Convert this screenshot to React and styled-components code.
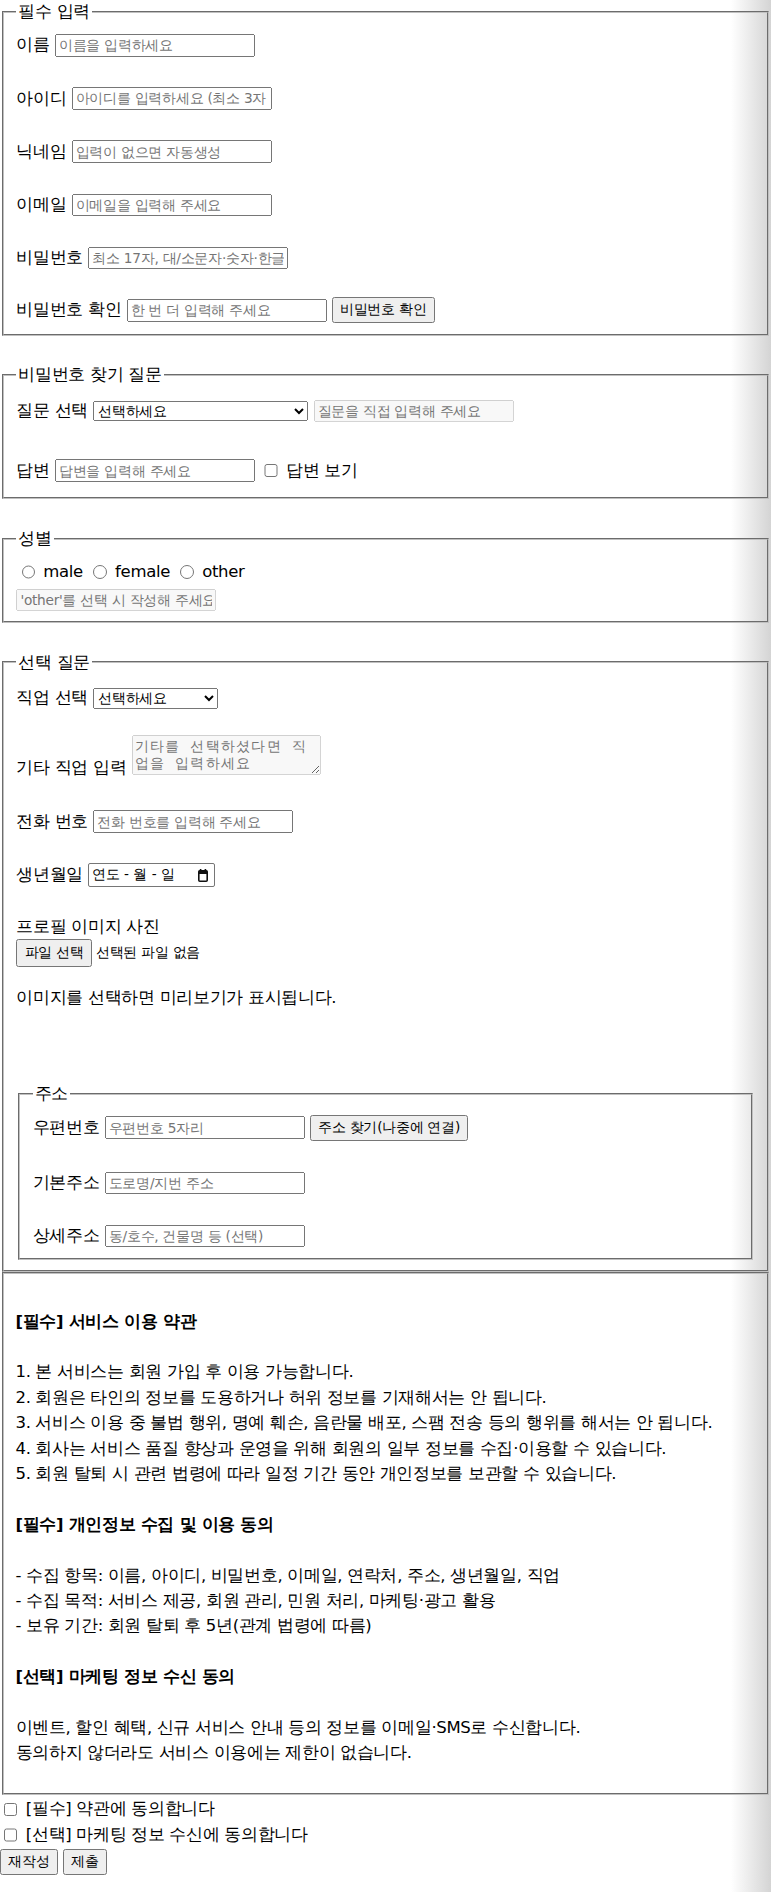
import React from 'react'
import styled, { createGlobalStyle, css } from 'styled-components'

const GlobalStyle = createGlobalStyle`
  html {
    background: linear-gradient(90deg, #fff 0, #fff calc(100% - 40px), #d4d4d4 100%);
  }
  body {
    margin: 0;
    font-family: "DejaVu Sans", sans-serif;
    font-size: 16.5px;
    line-height: 1.45;
    letter-spacing: -0.33px;
    color: #000;
  }
`

const controlFont = css`
  font-family: "DejaVu Sans", sans-serif;
  font-size: 13.7px;
  letter-spacing: -0.27px;
`

const Form = styled.form`
  display: block;
`

const Fieldset = styled.fieldset`
  margin: ${p => p.$mt || 0}px 2px 0;
  padding: 5.8px 12.4px ${p => p.$pb ?? 10.3}px;
  border: 2px groove #c0c0c0;
  min-width: 0;
`

const Legend = styled.legend`
  padding: 0 2px;
`

const Row = styled.div`
  display: flex;
  align-items: ${p => p.$align || 'center'};
  gap: ${p => p.$gap ?? 5.25}px;
  margin-top: ${p => p.$mt || 0}px;
  height: ${p => (p.$h ? `${p.$h}px` : 'auto')};
`

const Label = styled.label`
  white-space: nowrap;
  margin-bottom: ${p => (p.$drop ? -4.8 : 0)}px;
`

const TextInput = styled.input`
  ${controlFont};
  box-sizing: border-box;
  width: ${p => p.$w || 200}px;
  height: 22.5px;
  padding: 1px 2px;
  margin: 0;
  flex: none;
`

const Select = styled.select`
  ${controlFont};
  box-sizing: border-box;
  width: ${p => p.$w}px;
  height: 20.5px;
  margin: 0;
  flex: none;
`

const Button = styled.button`
  ${controlFont};
  height: ${p => p.$h || 26}px;
  padding: 1px 6.2px;
  margin: 0;
  flex: none;
  white-space: nowrap;
`

const Check = styled.input`
  width: 13.4px;
  height: 13.4px;
  margin: 0 3.1px 0 ${p => p.$ml ?? 4.1}px;
  flex: none;
`

const Radio = styled.input`
  width: 13.4px;
  height: 13.4px;
  margin: 0 3.1px 0 5.2px;
  flex: none;
`

const TextArea = styled.textarea`
  box-sizing: border-box;
  width: 189px;
  height: 39.7px;
  padding: 2px;
  margin: 0;
  font-family: "DejaVu Sans Mono", monospace;
  font-size: 14.2px;
  line-height: 16.5px;
  letter-spacing: 1.3px;
  flex: none;
`

const DateField = styled.div`
  ${controlFont};
  box-sizing: border-box;
  width: 127px;
  height: 23.4px;
  display: flex;
  align-items: center;
  gap: 4.7px;
  padding: 0 6px 0 2.5px;
  border: 1px solid #767676;
  border-radius: 2px;
  background: #fff;
  flex: none;

  svg {
    margin-left: auto;
  }
`

const FileNote = styled.span`
  ${controlFont};
  white-space: nowrap;
`

const Text = styled.p`
  margin: ${p => p.$mt || 0}px 0 0;
`

const Terms = styled.div`
  margin: 0 2px;
  padding: 34.2px 11.5px 26.8px;
  border: 2px groove #c0c0c0;
  line-height: 25.4px;
`

const TermsSection = styled.section`
  & + & {
    margin-top: 25.4px;
  }
`

const TermsTitle = styled.h4`
  margin: 0;
  font-size: inherit;
  font-weight: bold;
`

const TermsBody = styled.div`
  margin-top: 25.4px;
`

const CalendarIcon = () => (
  <svg width="10" height="13" viewBox="0 0 10 13" aria-hidden="true">
    <rect x="1.8" y="0" width="1.6" height="3" fill="#111" />
    <rect x="6.6" y="0" width="1.6" height="3" fill="#111" />
    <rect x="0.8" y="1.8" width="8.4" height="10.4" rx="1" fill="none" stroke="#111" strokeWidth="1.6" />
    <rect x="0.8" y="1.8" width="8.4" height="3.2" fill="#111" />
  </svg>
)

const terms = [
  {
    title: '[필수] 서비스 이용 약관',
    lines: [
      '1. 본 서비스는 회원 가입 후 이용 가능합니다.',
      '2. 회원은 타인의 정보를 도용하거나 허위 정보를 기재해서는 안 됩니다.',
      '3. 서비스 이용 중 불법 행위, 명예 훼손, 음란물 배포, 스팸 전송 등의 행위를 해서는 안 됩니다.',
      '4. 회사는 서비스 품질 향상과 운영을 위해 회원의 일부 정보를 수집·이용할 수 있습니다.',
      '5. 회원 탈퇴 시 관련 법령에 따라 일정 기간 동안 개인정보를 보관할 수 있습니다.',
    ],
  },
  {
    title: '[필수] 개인정보 수집 및 이용 동의',
    lines: [
      '- 수집 항목: 이름, 아이디, 비밀번호, 이메일, 연락처, 주소, 생년월일, 직업',
      '- 수집 목적: 서비스 제공, 회원 관리, 민원 처리, 마케팅·광고 활용',
      '- 보유 기간: 회원 탈퇴 후 5년(관계 법령에 따름)',
    ],
  },
  {
    title: '[선택] 마케팅 정보 수신 동의',
    lines: [
      '이벤트, 할인 혜택, 신규 서비스 안내 등의 정보를 이메일·SMS로 수신합니다.',
      '동의하지 않더라도 서비스 이용에는 제한이 없습니다.',
    ],
  },
]

const App = () => {
  return (
    <>
      <GlobalStyle />
      <Form onSubmit={e => e.preventDefault()}>
        <Fieldset>
          <Legend>필수 입력</Legend>
          <Row $mt={3.6}>
            <Label>이름</Label>
            <TextInput placeholder="이름을 입력하세요" />
          </Row>
          <Row $mt={29.3}>
            <Label>아이디</Label>
            <TextInput placeholder="아이디를 입력하세요 (최소 3자 이상)" />
          </Row>
          <Row $mt={29.3}>
            <Label>닉네임</Label>
            <TextInput placeholder="입력이 없으면 자동생성" />
          </Row>
          <Row $mt={29.3}>
            <Label>이메일</Label>
            <TextInput type="email" placeholder="이메일을 입력해 주세요" />
          </Row>
          <Row $mt={29.3}>
            <Label>비밀번호</Label>
            <TextInput type="password" placeholder="최소 17자, 대/소문자·숫자·한글·특수문자 포함" />
          </Row>
          <Row $mt={27.3}>
            <Label>비밀번호 확인</Label>
            <TextInput type="password" placeholder="한 번 더 입력해 주세요" />
            <Button type="button">비밀번호 확인</Button>
          </Row>
        </Fieldset>

        <Fieldset $mt={27.2} $pb={14.8}>
          <Legend>비밀번호 찾기 질문</Legend>
          <Row $mt={6.2}>
            <Label>질문 선택</Label>
            <Select $w={215} defaultValue="">
              <option value="">선택하세요</option>
              <option>가장 기억에 남는 선생님 성함은?</option>
              <option>처음 키운 반려동물의 이름은?</option>
              <option>직접 입력</option>
            </Select>
            <TextInput disabled placeholder="질문을 직접 입력해 주세요" />
          </Row>
          <Row $mt={36}>
            <Label>답변</Label>
            <TextInput placeholder="답변을 입력해 주세요" />
            <Check type="checkbox" id="show-answer" />
            <Label htmlFor="show-answer">답변 보기</Label>
          </Row>
        </Fieldset>

        <Fieldset $mt={27.2}>
          <Legend>성별</Legend>
          <Row $mt={3.65}>
            <Radio type="radio" name="gender" id="g-male" />
            <Label htmlFor="g-male">male</Label>
            <Radio type="radio" name="gender" id="g-female" />
            <Label htmlFor="g-female">female</Label>
            <Radio type="radio" name="gender" id="g-other" />
            <Label htmlFor="g-other">other</Label>
          </Row>
          <Row $mt={4.65}>
            <TextInput disabled placeholder="'other'를 선택 시 작성해 주세요" />
          </Row>
        </Fieldset>

        <Fieldset $mt={27.2}>
          <Legend>선택 질문</Legend>
          <Row $mt={6.2}>
            <Label>직업 선택</Label>
            <Select $w={125} defaultValue="">
              <option value="">선택하세요</option>
              <option>학생</option>
              <option>회사원</option>
              <option>자영업</option>
              <option>기타</option>
            </Select>
          </Row>
          <Row $mt={24.8} $align="flex-end">
            <Label $drop>기타 직업 입력</Label>
            <TextArea disabled placeholder={'기타를 선택하셨다면 직\n업을 입력하세요'} />
          </Row>
          <Row $mt={34.9}>
            <Label>전화 번호</Label>
            <TextInput type="tel" placeholder="전화 번호를 입력해 주세요" />
          </Row>
          <Row $mt={29.5}>
            <Label>생년월일</Label>
            <DateField role="textbox" aria-label="생년월일">
              <span>연도</span>
              <span>-</span>
              <span>월</span>
              <span>-</span>
              <span>일</span>
              <CalendarIcon />
            </DateField>
          </Row>
          <Text $mt={27.8}>프로필 이미지 사진</Text>
          <Row $mt={0.4} $gap={4}>
            <Button type="button" $h={27.7}>파일 선택</Button>
            <FileNote>선택된 파일 없음</FileNote>
          </Row>
          <Text $mt={18.8}>이미지를 선택하면 미리보기가 표시됩니다.</Text>

          <Fieldset $mt={72}>
            <Legend>주소</Legend>
            <Row $mt={3.2}>
              <Label>우편번호</Label>
              <TextInput placeholder="우편번호 5자리" />
              <Button type="button">주소 찾기(나중에 연결)</Button>
            </Row>
            <Row $mt={30.7}>
              <Label>기본주소</Label>
              <TextInput placeholder="도로명/지번 주소" />
            </Row>
            <Row $mt={28.7}>
              <Label>상세주소</Label>
              <TextInput placeholder="동/호수, 건물명 등 (선택)" />
            </Row>
          </Fieldset>
        </Fieldset>

        <Terms>
          {terms.map(section => (
            <TermsSection key={section.title}>
              <TermsTitle>{section.title}</TermsTitle>
              <TermsBody>
                {section.lines.map(line => (
                  <div key={line}>{line}</div>
                ))}
              </TermsBody>
            </TermsSection>
          ))}
        </Terms>

        <Row $mt={2.2} $h={25.4}>
          <Check type="checkbox" id="agree-terms" />
          <Label htmlFor="agree-terms">[필수] 약관에 동의합니다</Label>
        </Row>
        <Row $h={25.4}>
          <Check type="checkbox" id="agree-marketing" />
          <Label htmlFor="agree-marketing">[선택] 마케팅 정보 수신에 동의합니다</Label>
        </Row>
        <Row $mt={1}>
          <Button type="reset">재작성</Button>
          <Button type="submit">제출</Button>
        </Row>
      </Form>
    </>
  )
}

export default App
